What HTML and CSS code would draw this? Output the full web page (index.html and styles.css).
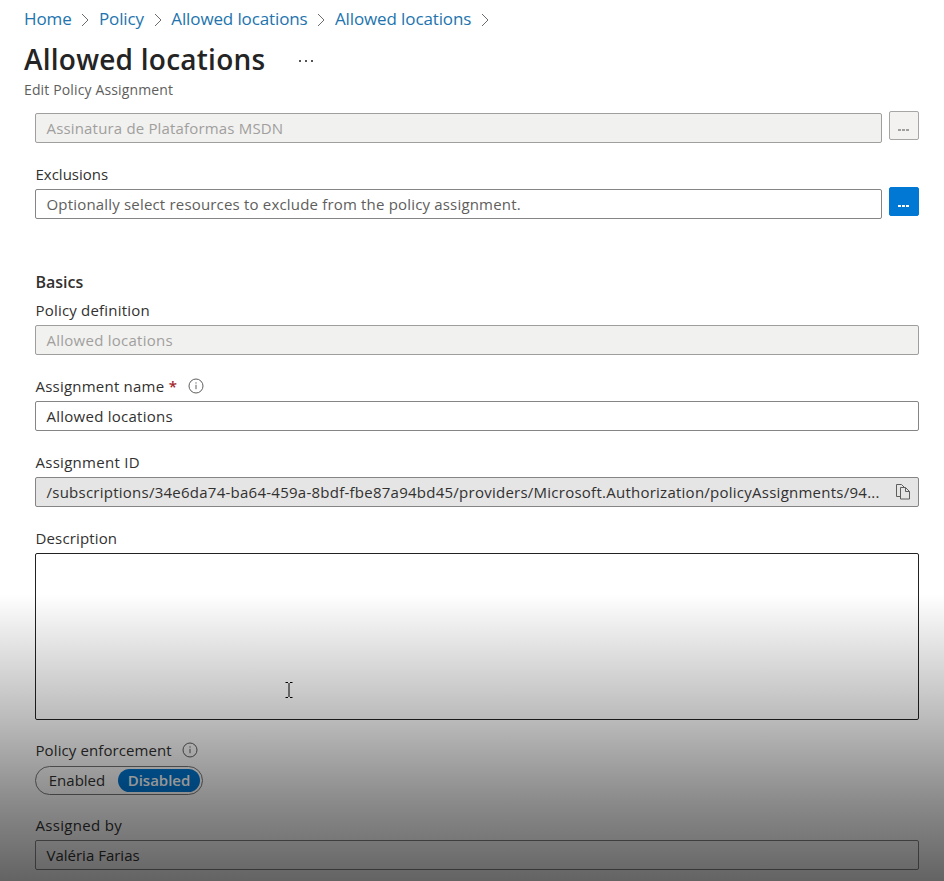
FILE: index.html
```html
<!DOCTYPE html>
<html lang="en">
<head>
<meta charset="utf-8">
<title>Allowed locations</title>
<link rel="stylesheet" href="styles.css">
</head>
<body>
<div class="page">
  <nav class="crumbs">
    <a class="home">Home</a><svg class="chev" viewBox="0 0 8 14"><path d="M1 1l6 6-6 6"/></svg>
    <a class="policy">Policy</a><svg class="chev" viewBox="0 0 8 14"><path d="M1 1l6 6-6 6"/></svg>
    <a class="loc">Allowed locations</a><svg class="chev" viewBox="0 0 8 14"><path d="M1 1l6 6-6 6"/></svg>
    <a class="loc">Allowed locations</a><svg class="chev" viewBox="0 0 8 14"><path d="M1 1l6 6-6 6"/></svg>
  </nav>
  <header class="title-row">
    <h1>Allowed locations</h1>
    <svg class="dots" viewBox="0 0 14 2"><path d="M0 0h2v2H0zM6 0h2v2H6zM12 0h2v2h-2z"/></svg>
  </header>
  <div class="subtitle"><span>Edit Policy Assignment</span></div>
  <main class="form">
    <div class="picker">
      <div class="field disabled"><span class="t-scope">Assinatura de Plataformas MSDN</span></div>
      <button class="more off"><svg viewBox="0 0 11 2"><path d="M0 0h3v2H0zM4 0h3v2H4zM8 0h3v2H8z"/></svg></button>
    </div>
    <div class="label"><span class="l-excl">Exclusions</span></div>
    <div class="picker">
      <div class="field hint"><span class="t-hint">Optionally select resources to exclude from the policy assignment.</span></div>
      <button class="more on"><svg viewBox="0 0 11 2"><path d="M0 0h3v2H0zM4 0h3v2H4zM8 0h3v2H8z"/></svg></button>
    </div>
    <h2><span>Basics</span></h2>
    <div class="label first"><span class="l-def">Policy definition</span></div>
    <div class="field disabled"><span class="t-loc">Allowed locations</span></div>
    <div class="label"><span class="l-name">Assignment name</span><b class="req">*</b>
      <svg class="info" viewBox="0 0 16 16"><circle cx="8" cy="8" r="7"/><path d="M8 6.8v4.4M8 4.3v1.3"/></svg></div>
    <div class="field"><span class="t-loc">Allowed locations</span></div>
    <div class="label"><span class="l-id">Assignment ID</span></div>
    <div class="field readonly"><span class="t-id">/subscriptions/34e6da74-ba64-459a-8bdf-fbe87a94bd45/providers/Microsoft.Authorization/policyAssignments/94...</span>
      <svg class="copy" viewBox="0 0 14 16"><path d="M4 12.500H.5V.5h5L8 3M4.500 3.500h5l4 4v7.500h-9zM9.500 3.500v4h4"/></svg></div>
    <div class="label"><span class="l-desc">Description</span></div>
    <div class="area">
      <svg class="caret" viewBox="0 0 8 16"><path d="M.5 .5H3M5 .5h2.500M.5 15.500H3M5 15.500h2.500M4 1v14"/></svg>
    </div>
    <div class="label enforce"><span class="l-enf">Policy enforcement</span>
      <svg class="info" viewBox="0 0 16 16"><circle cx="8" cy="8" r="7"/><path d="M8 6.8v4.4M8 4.3v1.3"/></svg></div>
    <div class="toggle"><div class="opt"><span class="o-en">Enabled</span></div><div class="opt sel"><span class="o-dis">Disabled</span></div></div>
    <div class="label last"><span class="l-by">Assigned by</span></div>
    <div class="field"><span class="t-by">Valéria Farias</span></div>
  </main>
  <div class="shade"></div>
</div>
</body>
</html>
```
FILE: styles.css
```css
* { box-sizing: border-box; }
body { margin: 0; background: #fff; color: #323130; font: 15px/20px "Open Sans", "Noto Sans", sans-serif; }
.page { position: relative; height: 881px; overflow: hidden; padding-left: 24px; }
span, a { white-space: nowrap; }
svg { display: block; flex: none; fill: none; }
.crumbs { display: flex; align-items: center; height: 38px; font-size: 17px; color: #2274ae; letter-spacing: -.12px; }
.chev { width: 8px; height: 14px; margin: 1px 9.700px 0; stroke: #6c6c6c; }
.title-row { display: flex; align-items: center; height: 42px; }
h1 { margin: 0; font-size: 28px; line-height: 42px; font-weight: 600; color: #242424; letter-spacing: .24px; }
.dots { width: 14px; height: 2px; margin: 4px 0 0 34px; fill: #555; }
.subtitle { height: 20px; font-size: 14px; color: #605e5c; letter-spacing: .14px; }
.form { padding: 13px 25px 0 11px; }
.picker { display: flex; justify-content: space-between; height: 30px; }
.picker .field { width: 847px; }
.field { display: flex; align-items: center; justify-content: space-between; height: 30px; padding: 0 8px 0 10.500px; border: 1px solid #868584; border-radius: 2px; }
.disabled { background: #f1f1f0; border-color: #a19f9d; color: #a19f9d; }
.hint { color: #605e5c; }
.readonly { background: #e5e5e5; }
.more { width: 30px; height: 29px; margin: -2px 0 0; padding: 9px 1px 0 0; border: 1px solid #a8a6a4; border-radius: 2px; display: flex; justify-content: center; align-items: center; }
.more svg { width: 11px; height: 2px; }
.off { background: #f3f2f1; }
.off svg { fill: #a19f9d; }
.on { background: #0078d4; border-color: #0078d4; }
.on svg { fill: #fff; }
.label { display: flex; align-items: center; height: 20px; margin: 21px 0 5px; padding-left: .5px; }
.label.first { margin-top: 8px; }
.label.enforce { margin: 20px 0 6px; }
h2 { margin: 53px 0 0; padding-left: .5px; height: 20px; font-size: 16px; line-height: 20px; font-weight: 600; }
.req { color: #a4262c; margin-left: 4.500px; font-weight: 600; }
.info { width: 16px; height: 16px; margin-left: 10.500px; stroke: #605e5c; }
.copy { width: 14px; height: 16px; stroke: #605e5c; }
.area { position: relative; height: 167px; border: 1px solid #222; border-radius: 2px; }
.caret { position: absolute; left: 248.500px; top: 128px; width: 8px; height: 16px; stroke: #000; }
.toggle { display: flex; align-items: center; width: 168px; height: 29px; padding: 0 2px 0 0; border: 1px solid #777; border-radius: 15px; }
.opt { display: flex; justify-content: center; align-items: center; width: 82px; height: 23px; padding-bottom: 2px; border-radius: 12px; }
.sel { background: #0078d4; color: #fff; font-weight: 600; }
.toggle + .label { margin-top: 20px; }
.t-scope { letter-spacing: .17px; }
.t-hint { letter-spacing: .18px; }
.t-loc { letter-spacing: .25px; }
.t-id { letter-spacing: .25px; }
.l-def { letter-spacing: .2px; }
.l-name { letter-spacing: .22px; }
.l-id { letter-spacing: .28px; }
.l-desc { letter-spacing: .14px; }
.l-enf { letter-spacing: .1px; }
.l-by { letter-spacing: .32px; }
.shade { position: absolute; inset: 594px 0 0; background: linear-gradient(rgba(0,0,0,0), rgba(0,0,0,.06) 27px, rgba(0,0,0,.275) 128px, rgba(0,0,0,.46) 208px, rgba(0,0,0,.61) 287px); }
```
